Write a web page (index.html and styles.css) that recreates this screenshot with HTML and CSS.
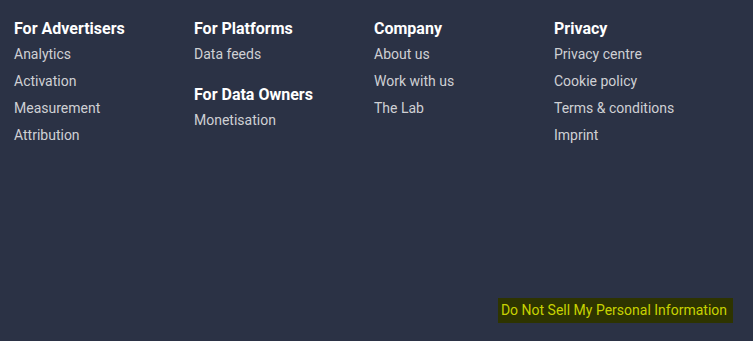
FILE: index.html
```html
<!DOCTYPE html>
<html lang="en">
<head>
    <meta charset="UTF-8">
    <meta name="viewport" content="width=device-width, initial-scale=1.0">
    <title>Footer</title>
    <link rel="stylesheet" href="styles.css">
</head>
<body>

    <footer class="footer">
        <div class="footerColumns">
            <div class="footerCol">
                <h3>For Advertisers</h3>
                <ul>
                    <li><a href="#">Analytics</a></li>
                    <li><a href="#">Activation</a></li>
                    <li><a href="#">Measurement</a></li>
                    <li><a href="#">Attribution</a></li>
                </ul>
            </div>
            <div class="footerCol">
                <h3>For Platforms</h3>
                <ul>
                    <li><a href="#">Data feeds</a></li>
                </ul>
                <h3 class="subHeading">For Data Owners</h3>
                <ul>
                    <li><a href="#">Monetisation</a></li>
                </ul>
            </div>
            <div class="footerCol">
                <h3>Company</h3>
                <ul>
                    <li><a href="#">About us</a></li>
                    <li><a href="#">Work with us</a></li>
                    <li><a href="#">The Lab</a></li>
                </ul>
            </div>
            <div class="footerCol">
                <h3>Privacy</h3>
                <ul>
                    <li><a href="#">Privacy centre</a></li>
                    <li><a href="#">Cookie policy</a></li>
                    <li><a href="#">Terms &amp; conditions</a></li>
                    <li><a href="#">Imprint</a></li>
                </ul>
            </div>
        </div>

        <a href="#" class="doNotSell">Do Not Sell My Personal Information</a>
    </footer>

</body>
</html>
```

FILE: styles.css
```css
body {
    margin: 0;
    background-color: #2b3245;
    font-family: Roboto, "Liberation Sans", sans-serif;
}
.footer {
    min-height: 100vh;
    box-sizing: border-box;
    display: flex;
    flex-direction: column;
    padding: 19px 20px 18px 14px;
}
.footerColumns {
    display: grid;
    grid-template-columns: repeat(4, 180px);
}
.footerCol h3 {
    margin: 0;
    font-size: 16px;
    line-height: 20px;
    font-weight: 700;
    color: #ffffff;
}
.footerCol .subHeading {
    margin-top: 17px;
}
.footerCol ul {
    list-style: none;
    margin: 2px 0 0;
    padding: 0;
}
.footerCol li {
    font-size: 14px;
    line-height: 27px;
}
.footerCol a {
    color: #cfd0d4;
    text-decoration: none;
}
.doNotSell {
    margin-top: auto;
    align-self: flex-end;
    background-color: #2e3400;
    color: #c8d200;
    font-size: 14px;
    line-height: 25px;
    padding: 0 6px 0 3px;
    text-decoration: none;
}
```
